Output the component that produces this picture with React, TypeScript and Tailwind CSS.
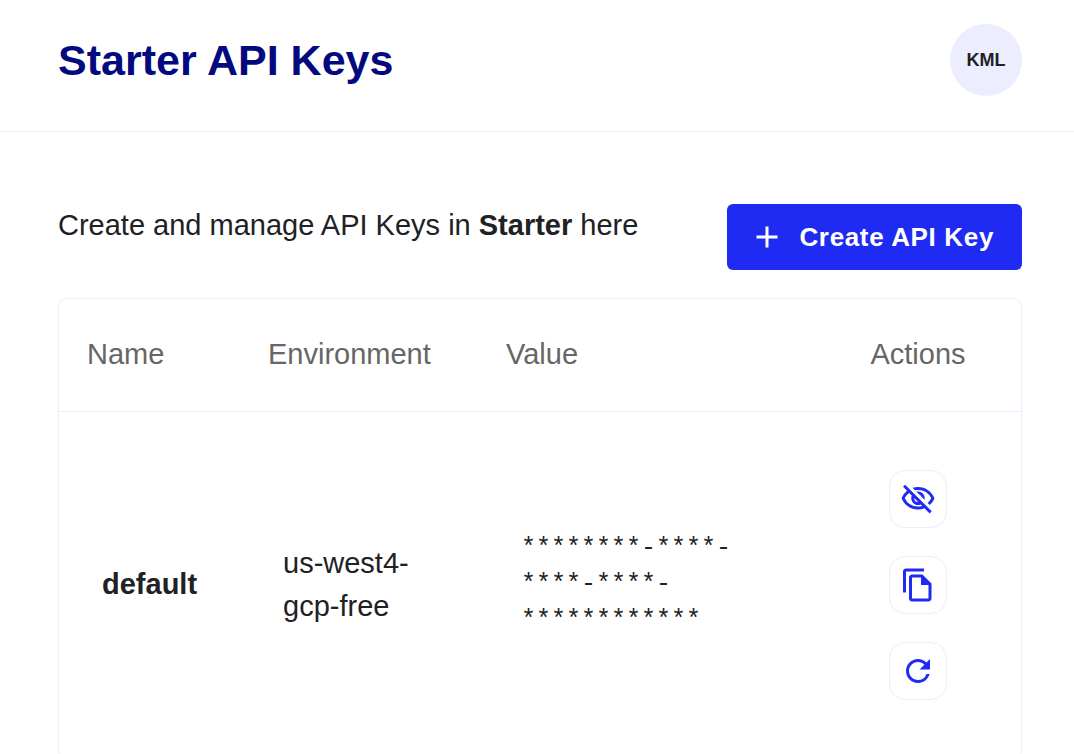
import React from "react";
import {
  MdAdd,
  MdOutlineFileCopy,
  MdOutlineVisibilityOff,
  MdRefresh,
} from "react-icons/md";

type ApiKey = { name: string; environment: string; value: string };

const keys: ApiKey[] = [
  {
    name: "default",
    environment: "us-west4-gcp-free",
    value: "********-****-****-****-************",
  },
];

function ActionButton({
  label,
  children,
}: {
  label: string;
  children: React.ReactNode;
}) {
  return (
    <button
      type="button"
      aria-label={label}
      className="flex size-[58px] items-center justify-center rounded-2xl border border-[#ecedfe] text-4xl text-[#1f2af2]"
    >
      {children}
    </button>
  );
}

export default function App() {
  return (
    <div className="min-h-screen bg-white font-['Liberation_Sans',Arial,sans-serif] text-[29px] text-[#202124]">
      <header className="flex items-start justify-between border-b border-[#eeeefa] pt-6 pr-[52px] pb-[35px] pl-[58px]">
        <h1 className="text-[43px] leading-[72px] font-bold text-[#030a80]">
          Starter API Keys
        </h1>
        <button
          type="button"
          className="flex size-[72px] items-center justify-center rounded-full bg-[#ecedfe] text-lg font-bold"
        >
          KML
        </button>
      </header>

      <main className="pt-[72px] pr-[52px] pl-[58px]">
        <div className="flex items-start justify-between gap-6">
          <p className="leading-[42px]">
            Create and manage API Keys in <strong>Starter</strong> here
          </p>
          <button
            type="button"
            className="flex h-[66px] shrink-0 items-center gap-3.5 rounded-md bg-[#1f2af2] pr-7 pl-[22px] text-[26px] font-bold tracking-wide text-white"
          >
            <MdAdd className="size-9" aria-hidden="true" />
            Create API Key
          </button>
        </div>

        <div className="mt-7 rounded-lg border border-[#ecedfe]">
          <table className="w-full table-fixed text-left">
            <thead>
              <tr className="h-28 border-b border-[#ecedfe] text-[#666666]">
                <th scope="col" className="w-[181px] pl-7 font-normal">
                  Name
                </th>
                <th scope="col" className="w-[238px] pl-7 font-normal">
                  Environment
                </th>
                <th scope="col" className="pl-7 font-normal">
                  Value
                </th>
                <th
                  scope="col"
                  className="w-[178px] pr-[54px] pl-[26px] text-center font-normal"
                >
                  Actions
                </th>
              </tr>
            </thead>
            <tbody>
              {keys.map((key) => (
                <tr key={key.name}>
                  <th scope="row" className="pl-[43px] font-bold">
                    {key.name}
                  </th>
                  <td className="pr-7 pl-[43px] leading-[43px]">
                    {key.environment}
                  </td>
                  <td className="pl-[43px]">
                    <div className="max-w-[240px] font-['Liberation_Mono',monospace] text-[25px] leading-9">
                      {key.value}
                    </div>
                  </td>
                  <td className="py-[58px] pr-[54px] pl-[26px]">
                    <div className="flex flex-col items-center gap-7">
                      <ActionButton label="Show key">
                        <MdOutlineVisibilityOff aria-hidden="true" />
                      </ActionButton>
                      <ActionButton label="Copy key">
                        <MdOutlineFileCopy aria-hidden="true" />
                      </ActionButton>
                      <ActionButton label="Regenerate key">
                        <MdRefresh aria-hidden="true" />
                      </ActionButton>
                    </div>
                  </td>
                </tr>
              ))}
            </tbody>
          </table>
        </div>
      </main>
    </div>
  );
}
